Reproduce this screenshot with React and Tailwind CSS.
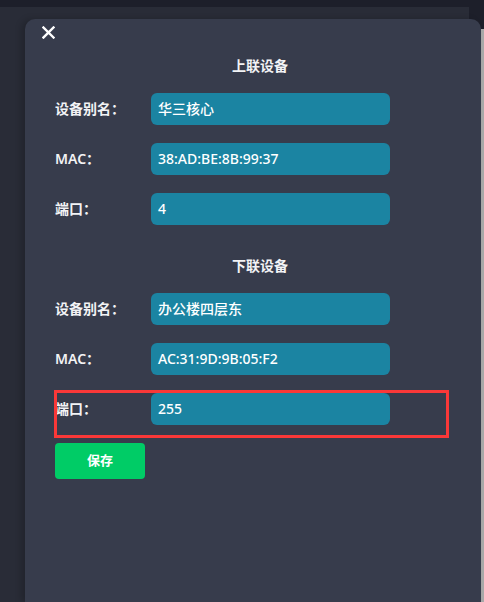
import React from "react";

const font = { fontFamily: '"Noto Sans", "Noto Sans CJK SC", sans-serif' };

function Row({ label, value }) {
  return (
    <div className="flex items-center h-[32px]">
      <div className="w-[96px] text-[14px] font-semibold text-[#f2f3f5] leading-none">{label}</div>
      <div className="w-[239px] h-[32px] rounded-[6px] bg-[#1b84a2] flex items-center px-[7px] text-[14px] font-medium text-white leading-none">
        {value}
      </div>
    </div>
  );
}

function Section({ title, rows, highlightLast }) {
  return (
    <div className="flex flex-col gap-[18px]">
      <div className="h-[20px] flex items-center justify-center text-[14px] font-semibold text-[#f2f3f5]">{title}</div>
      {rows.map((r, i) => (
        <div key={i} className="relative">
          <Row label={r[0]} value={r[1]} />
          {highlightLast && i === rows.length - 1 && (
            <div className="absolute left-[-1px] top-[-3px] w-[395px] h-[48px] border-[3px] border-[#fa3838] pointer-events-none" />
          )}
        </div>
      ))}
    </div>
  );
}

export default function App() {
  return (
    <div className="relative w-[484px] h-[602px] overflow-hidden bg-[#1d1f2a]" style={font}>
      <div className="mt-[7px] w-[469px] h-[595px] bg-[#292c37]" />
      <div className="absolute right-0 top-[29px] w-[3px] bottom-0 bg-[#a9a9a9]" />
      <div className="absolute left-[25px] top-[19px] w-[456px] bottom-0 rounded-t-[10px] bg-[#373c4c] shadow-[-4px_0_6px_rgba(0,0,0,0.18)]">
        <div className="pt-[7px] pl-[17px] h-[19px]">
          <svg width="13" height="13" viewBox="0 0 13 13">
            <path d="M1.5 1.5 L11.5 11.5 M11.5 1.5 L1.5 11.5" stroke="#ffffff" strokeWidth="2.4" strokeLinecap="square" />
          </svg>
        </div>
        <div className="ml-[30px] w-[410px] mt-[17px] flex flex-col gap-[30px]">
          <Section
            title="上联设备"
            rows={[
              ["设备别名：", "华三核心"],
              ["MAC：", "38:AD:BE:8B:99:37"],
              ["端口：", "4"],
            ]}
          />
          <div className="flex flex-col gap-[18px]">
            <Section
              title="下联设备"
              highlightLast
              rows={[
                ["设备别名：", "办公楼四层东"],
                ["MAC：", "AC:31:9D:9B:05:F2"],
                ["端口：", "255"],
              ]}
            />
            <button className="w-[90px] h-[36px] rounded-[4px] bg-[#00cc66] text-white text-[13px] font-semibold">
              保存
            </button>
          </div>
        </div>
      </div>
    </div>
  );
}
